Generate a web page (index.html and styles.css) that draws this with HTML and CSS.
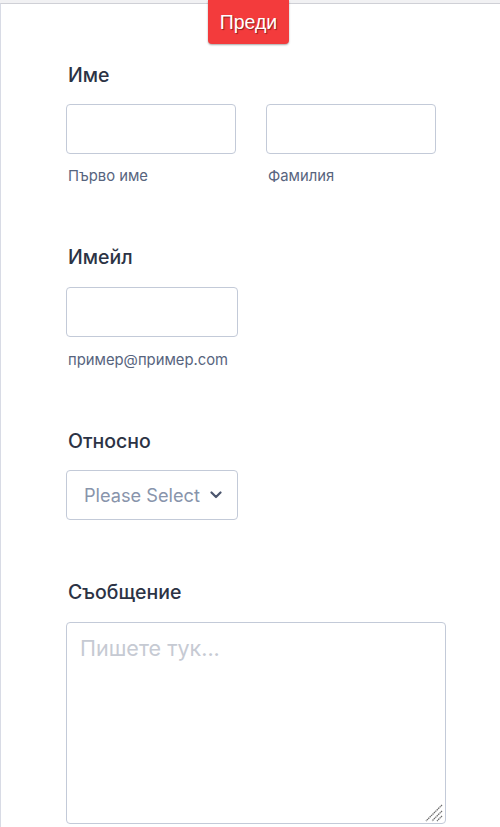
FILE: index.html
```html
<!DOCTYPE html>
<html lang="bg">
<head>
<meta charset="utf-8">
<title>Форма</title>
<link rel="stylesheet" href="styles.css">
</head>
<body>
<div class="frame">
  <button class="prev-btn" type="button">Преди</button>
  <form class="form">
    <div class="field field-name">
      <label class="label">Име</label>
      <div class="name-row">
        <div class="sub">
          <input class="input input-name" type="text">
          <span class="sublabel">Първо име</span>
        </div>
        <div class="sub">
          <input class="input input-name" type="text">
          <span class="sublabel">Фамилия</span>
        </div>
      </div>
    </div>
    <div class="field field-email">
      <label class="label">Имейл</label>
      <input class="input input-email" type="email">
      <span class="sublabel sublabel-email">пример@пример.com</span>
    </div>
    <div class="field field-select">
      <label class="label">Относно</label>
      <div class="select">
        <span class="select-text">Please Select</span>
        <svg class="chev" width="12" height="8" viewBox="0 0 12 8"><path d="M1.5 1.5 L6 6 L10.5 1.5" fill="none" stroke="#4c566e" stroke-width="2.2" stroke-linecap="round" stroke-linejoin="round"/></svg>
      </div>
    </div>
    <div class="field field-msg">
      <label class="label">Съобщение</label>
      <div class="ta-wrap">
        <textarea class="textarea" placeholder="Пишете тук..."></textarea>
        <svg class="grip" width="18" height="18" viewBox="0 0 18 18"><path d="M17 1 L1 17 M17 7 L7 17 M17 12 L12 17" fill="none" stroke="#6b6b6b" stroke-width="1.3" stroke-dasharray="1.4 0.6"/></svg>
      </div>
    </div>
  </form>
</div>
</body>
</html>
```
FILE: styles.css
```css
html, body {
  margin: 0;
  padding: 0;
}
body {
  background: #f1f1f3;
  font-family: Inter, "Noto Sans", sans-serif;
  height: 827px;
  overflow: hidden;
}
.frame {
  position: relative;
  margin-top: 3px;
  background: #fff;
  border-top: 1px solid #cfd0d6;
  border-left: 1px solid #d8dbe5;
  height: 900px;
  box-sizing: border-box;
}
.prev-btn {
  position: absolute;
  top: -4px;
  left: 207px;
  width: 81px;
  height: 44px;
  padding: 0;
  border: none;
  border-radius: 0 0 4px 4px;
  background: #f33b3c;
  color: #fff;
  font-family: "Liberation Sans", Arial, sans-serif;
  font-size: 19.5px;
  line-height: 44px;
  text-shadow: 1px 1px 1px rgba(0, 0, 0, 0.45);
  box-shadow: 0 1px 2px rgba(0, 0, 0, 0.35);
}
.form {
  padding: 57px 0 0 65px;
}
.field {
  display: flex;
  flex-direction: column;
  align-items: flex-start;
}
.label {
  font-size: 19.5px;
  font-weight: 500;
  line-height: 28px;
  color: #2c3345;
  padding-left: 2px;
}
.name-row {
  display: flex;
  gap: 30px;
  margin-top: 15px;
}
.sub {
  display: flex;
  flex-direction: column;
}
.input {
  box-sizing: border-box;
  height: 50px;
  border: 1px solid #c3cad8;
  border-radius: 4px;
  background: #fff;
  margin: 0;
  padding: 0 10px;
  font-family: inherit;
  font-size: 16px;
}
.input-name {
  width: 170px;
}
.input-email {
  width: 172px;
  margin-top: 16px;
}
.sublabel {
  display: block;
  margin-top: 12px;
  font-size: 14.8px;
  line-height: 20px;
  color: #57647e;
  padding-left: 2px;
}
.sublabel-email {
  margin-top: 13px;
}
.field-email {
  margin-top: 57px;
}
.field-select {
  margin-top: 57px;
}
.select {
  box-sizing: border-box;
  width: 172px;
  height: 50px;
  margin-top: 15px;
  border: 1px solid #c3cad8;
  border-radius: 4px;
  display: flex;
  align-items: center;
  justify-content: space-between;
  padding: 0 15px 0 17px;
}
.select-text {
  font-size: 18.2px;
  color: #8894ab;
}
.chev {
  display: block;
}
.field-msg {
  margin-top: 58px;
}
.ta-wrap {
  position: relative;
  margin-top: 16px;
}
.textarea {
  display: block;
  box-sizing: border-box;
  width: 380px;
  height: 202px;
  border: 1px solid #c3cad8;
  border-radius: 4px;
  padding: 12px 13px;
  font-family: inherit;
  font-size: 21.5px;
  color: #2c3345;
  resize: none;
}
.textarea::placeholder {
  color: #c6cad3;
}
.grip {
  position: absolute;
  right: 3px;
  bottom: 2px;
  pointer-events: none;
}
```
